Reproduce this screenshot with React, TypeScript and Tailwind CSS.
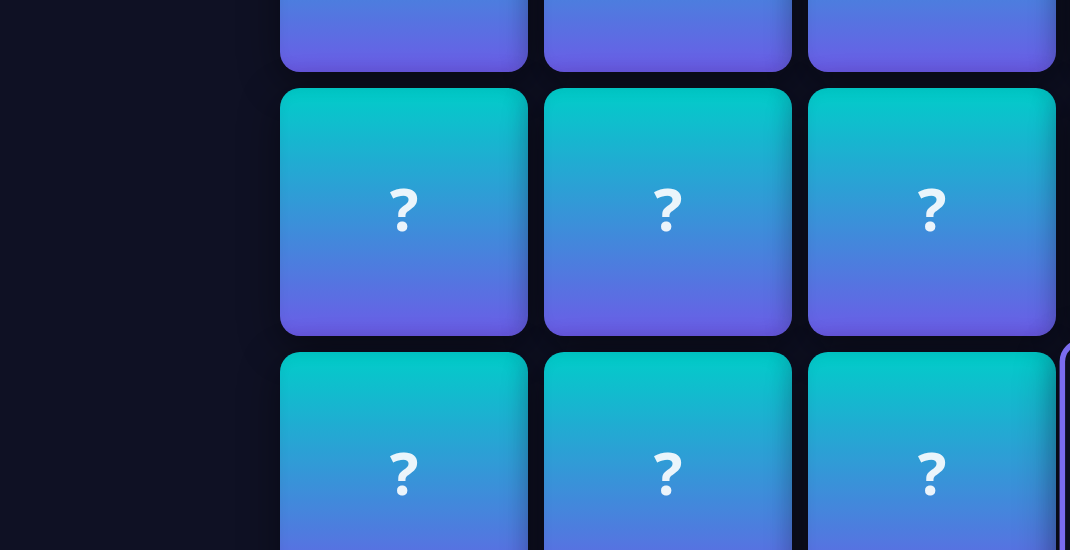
const cards = Array.from({ length: 12 }, (_, i) => ({ id: i, active: i === 11 }))

function Card({ active }: { active: boolean }) {
  if (active) {
    return (
      <div className="h-[248px] w-[248px] scale-110 rounded-[20px] border-[5px] border-[#7b6cf0] bg-[#0d0e1f] shadow-[0_10px_40px_rgba(0,0,0,0.4)]" />
    )
  }
  return (
    <div className="flex h-[248px] w-[248px] items-center justify-center rounded-[20px] bg-[linear-gradient(to_bottom,#00cec9,#6c5ce7)] shadow-[0_10px_40px_rgba(0,0,0,0.45),inset_-6px_0_16px_rgba(20,20,60,0.12)]">
      <span className="pb-2 font-['Noto_Sans',sans-serif] text-[60px] font-bold leading-none text-white/90">?</span>
    </div>
  )
}

export default function App() {
  return (
    <div className="flex h-[550px] w-full overflow-hidden bg-[#0f1124]">
      <aside className="w-[280px] shrink-0" />
      <main className="-mt-[176px] shrink-0">
        <div className="grid grid-cols-[repeat(4,248px)] gap-4">
          {cards.map((card) => (
            <Card key={card.id} active={card.active} />
          ))}
        </div>
      </main>
    </div>
  )
}
